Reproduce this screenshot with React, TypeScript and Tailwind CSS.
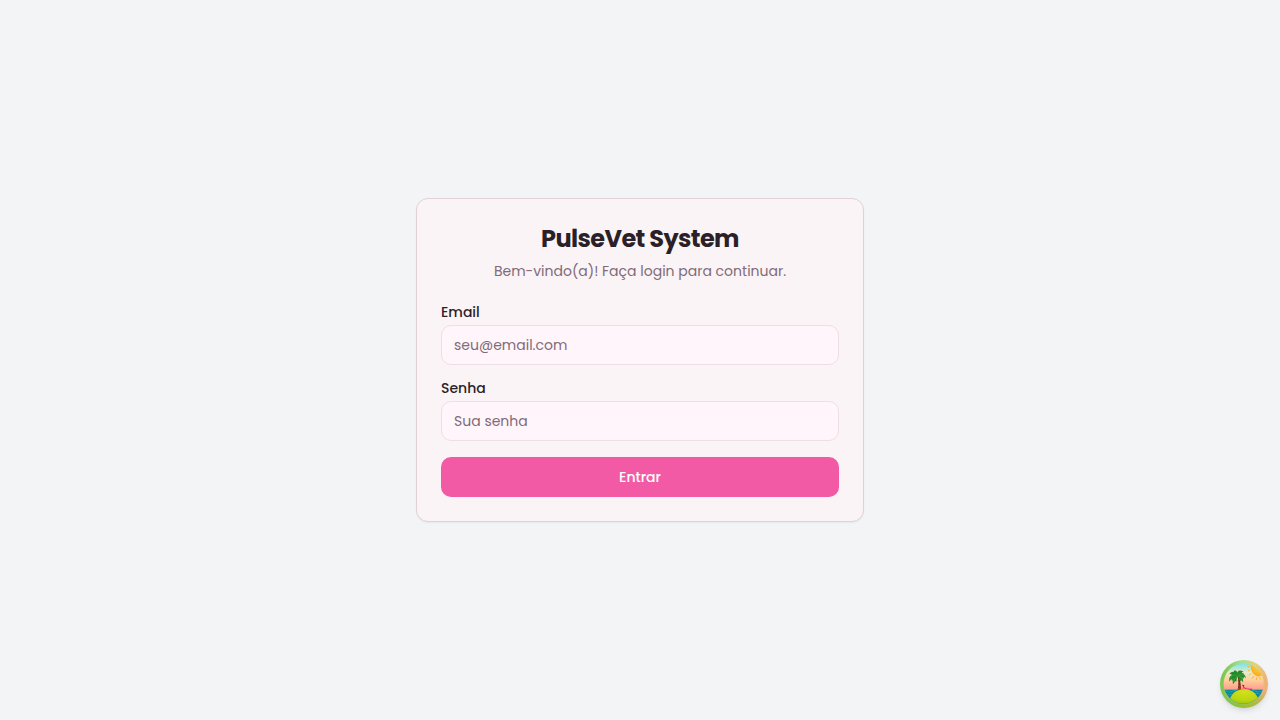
import { useState } from "react";
import type { FormEvent } from "react";

function IslandIcon() {
  return (
    <svg viewBox="0 0 144 144" className="size-12" aria-hidden="true">
      <defs>
        <linearGradient id="ring" x1="0" y1="0.4" x2="1" y2="0.6">
          <stop offset="0" stopColor="#79c344" />
          <stop offset="0.35" stopColor="#a0e09c" />
          <stop offset="0.65" stopColor="#dfd47c" />
          <stop offset="1" stopColor="#f2a878" />
        </linearGradient>
        <linearGradient id="ringShade" x1="0.1" y1="0" x2="0" y2="1">
          <stop offset="0.55" stopColor="#6bb01c" stopOpacity="0" />
          <stop offset="1" stopColor="#83b51c" stopOpacity="0.85" />
        </linearGradient>
        <linearGradient id="sky" x1="0" y1="0" x2="0" y2="1">
          <stop offset="0.08" stopColor="#7fe3ea" />
          <stop offset="0.26" stopColor="#e8eac8" />
          <stop offset="0.42" stopColor="#ffcf9c" />
          <stop offset="0.66" stopColor="#ff9388" />
        </linearGradient>
        <radialGradient id="island" cx="0.5" cy="0.1" r="0.9">
          <stop offset="0" stopColor="#d6e01b" />
          <stop offset="0.55" stopColor="#b8d612" />
          <stop offset="1" stopColor="#7fb012" />
        </radialGradient>
        <linearGradient id="trunk" x1="0" y1="0" x2="0" y2="1">
          <stop offset="0" stopColor="#5b2417" />
          <stop offset="1" stopColor="#a8442c" />
        </linearGradient>
        <radialGradient id="sun" cx="0.7" cy="0.1" r="1">
          <stop offset="0" stopColor="#ffd52c" />
          <stop offset="1" stopColor="#fba524" />
        </radialGradient>
        <clipPath id="scene">
          <circle cx="71" cy="71" r="60" />
        </clipPath>
      </defs>
      <circle cx="72" cy="72" r="72" fill="url(#ring)" />
      <circle cx="72" cy="72" r="72" fill="url(#ringShade)" />
      <g clipPath="url(#scene)">
        <rect width="144" height="144" fill="url(#sky)" />
        <path d="M92 14 H128 V44 C112 58 91 42 92 14 Z" fill="url(#sun)" />
        <g stroke="#f6b51e" strokeWidth="3" strokeLinecap="round">
          <path d="M88 31 l-3 1 M92 41 l-4 4 M100 49 l-3 5 M110 54 l-1 5 M120 53 l1 4 M87 20 l-3 0" />
        </g>
        <rect y="89" width="144" height="55" fill="#0b8398" />
        <g fill="none" stroke="#25bdbb" strokeWidth="2">
          <path d="M8 94 q7 -5 14 0 t14 0 t14 0" />
          <path d="M8 102 q7 -5 14 0 t14 0" />
          <path d="M94 94 q7 -5 14 0 t14 0 t14 0" />
          <path d="M102 102 q7 -5 14 0 t14 0" />
        </g>
        <path d="M51 46 C57 60 56 76 52 93 L63 93 C64 77 61 58 54 45 Z" fill="url(#trunk)" />
        <path d="M53 62 l6 2 M54 71 l6 2 M54 80 l7 2" stroke="#4a1c14" strokeWidth="1.5" />
        <g fill="none" stroke="#d92356" strokeWidth="3" strokeLinecap="round" strokeLinejoin="round">
          <path d="M67 75 L74 85 L95 88" />
          <path d="M71 82 L67 90 M93 88 L95 93" strokeWidth="2" />
          <path d="M78 84 L95 86" stroke="#ff6ba4" />
        </g>
        <circle cx="71" cy="77" r="2" fill="#632026" />
        <path d="M22 144 C28 106 43 88 73 88 C101 88 116 106 124 144 Z" fill="url(#island)" />
        <g fill="#238a2d">
          <path d="M52 46 C47 34 36 31 28 42 C35 41 38 45 34 50 Z" />
          <path d="M52 44 C36 40 25 50 28 65 L34 56 L36 64 L41 55 L44 59 Z" />
          <path d="M52 45 C40 50 35 62 40 73 L45 64 L49 65 Z" />
          <path d="M52 47 C49 32 58 28 70 34 L65 38 L73 41 Z" />
          <path d="M52 47 C62 35 76 40 78 54 L72 50 L70 57 L64 50 Z" />
          <path d="M52 46 C66 48 71 56 69 67 L64 61 L61 64 L57 56 Z" />
          <path d="M51 48 C40 45 38 36 44 31 C51 33 56 40 54 48 Z" />
        </g>
        <path d="M52 47 C44 43 36 45 31 53 M54 46 C61 41 69 42 73 48 M52 48 C45 53 42 60 41 66 M54 48 C62 50 67 56 67 61" fill="none" stroke="#58b642" strokeWidth="1.5" />
      </g>
    </svg>
  );
}

type FieldProps = {
  id: string;
  label: string;
  type: string;
  placeholder: string;
  value: string;
  onChange: (value: string) => void;
};

function Field({ id, label, type, placeholder, value, onChange }: FieldProps) {
  return (
    <div className="flex flex-col gap-1.5">
      <label htmlFor={id} className="text-sm leading-[14px] font-medium text-[#2b1f28]">
        {label}
      </label>
      <input
        id={id}
        type={type}
        placeholder={placeholder}
        value={value}
        onChange={(event) => onChange(event.target.value)}
        className="h-10 w-full rounded-[10px] border border-[#eddfe7] bg-[#fff5fb] px-3 text-sm text-[#2b1f28] outline-none placeholder:text-[#816b78] focus:border-[#f459a4]"
      />
    </div>
  );
}

export default function App() {
  const [email, setEmail] = useState("");
  const [password, setPassword] = useState("");

  const handleSubmit = (event: FormEvent) => event.preventDefault();

  return (
    <div className="flex min-h-screen items-center justify-center bg-[#f3f4f6] font-[Poppins,Inter,sans-serif] text-[#2b1f28]">
      <main className="w-full max-w-md rounded-xl border border-[#e2d0d9] bg-[#faf4f6] shadow-xs">
        <header className="flex flex-col gap-1.5 p-6 text-center">
          <h1 className="text-2xl font-bold tracking-tight">PulseVet System</h1>
          <p className="text-sm text-[#816b78]">Bem-vindo(a)! Faça login para continuar.</p>
        </header>
        <form onSubmit={handleSubmit} className="flex flex-col gap-4 px-6 pb-6">
          <Field
            id="email"
            label="Email"
            type="email"
            placeholder="seu@email.com"
            value={email}
            onChange={setEmail}
          />
          <Field
            id="password"
            label="Senha"
            type="password"
            placeholder="Sua senha"
            value={password}
            onChange={setPassword}
          />
          <button
            type="submit"
            className="h-10 w-full rounded-[10px] bg-[#f25aa5] text-sm font-medium text-white hover:bg-[#e94c98]"
          >
            Entrar
          </button>
        </form>
      </main>
      <button
        type="button"
        aria-label="Open developer tools"
        className="fixed right-3 bottom-3 size-12 rounded-full shadow-md"
      >
        <IslandIcon />
      </button>
    </div>
  );
}
